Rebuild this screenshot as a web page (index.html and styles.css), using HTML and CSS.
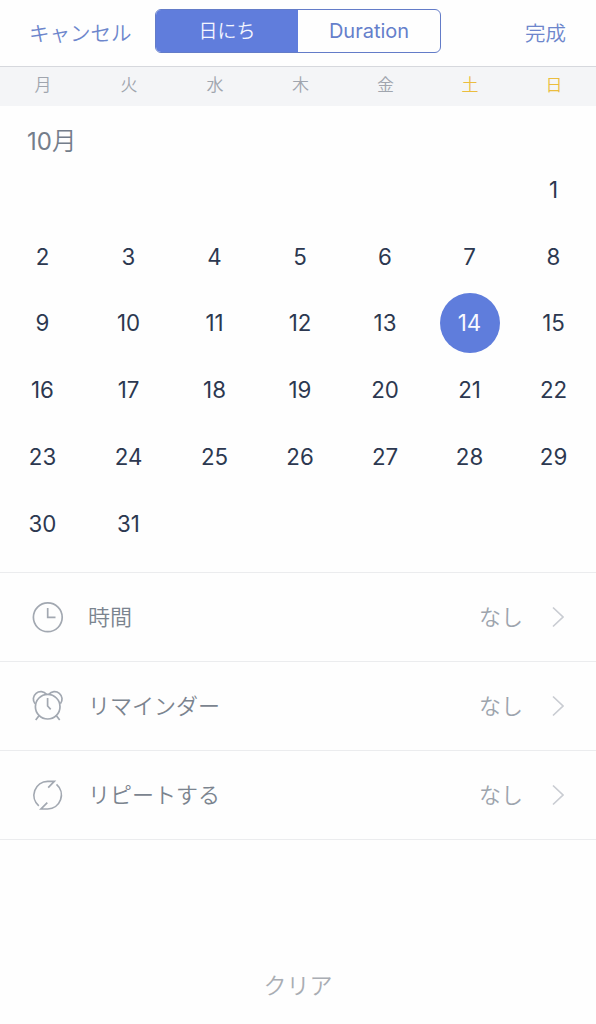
FILE: index.html
```html
<!DOCTYPE html>
<html lang="ja">
<head>
<meta charset="utf-8">
<title>日にち</title>
<link rel="stylesheet" href="styles.css">
</head>
<body>
<header class="navbar">
  <a class="nav-action cancel">キャンセル</a>
  <div class="segmented">
    <span class="segment active">日にち</span>
    <span class="segment latin">Duration</span>
  </div>
  <a class="nav-action done">完成</a>
</header>
<div class="week columns">
  <span>月</span><span>火</span><span>水</span><span>木</span><span>金</span><span class="weekend">土</span><span class="weekend">日</span>
</div>
<main>
  <h1 class="month"><span class="number">10</span>月</h1>
  <div class="days columns">
    <span class="first">1</span>
    <span>2</span><span>3</span><span>4</span><span>5</span><span>6</span><span>7</span><span>8</span>
    <span>9</span><span>10</span><span>11</span><span>12</span><span>13</span><span class="selected">14</span><span>15</span>
    <span>16</span><span>17</span><span>18</span><span>19</span><span>20</span><span>21</span><span>22</span>
    <span>23</span><span>24</span><span>25</span><span>26</span><span>27</span><span>28</span><span>29</span>
    <span>30</span><span>31</span>
  </div>
  <ul class="options">
    <li class="option">
      <svg class="icon" viewBox="0 0 32 32"><circle cx="15.800" cy="16.300" r="14.400"/><path d="M15.700 7V16.400H23.500"/></svg>
      <span class="label">時間</span><span class="value">なし</span>
      <svg class="chevron" viewBox="0 0 12 22"><path d="M1 1.500 11 11 1 20.500"/></svg>
    </li>
    <li class="option">
      <svg class="icon" viewBox="0 0 32 32"><circle cx="15.700" cy="16.700" r="12.300"/><path d="M15.600 8V16L18.700 19.400M3 13.700A7.300 7.300 0 1 1 14.500 4.400M28.400 13.700A7.300 7.300 0 1 0 16.900 4.400M7.200 25.500 3.700 30M24.200 25.500 27.700 30"/></svg>
      <span class="label">リマインダー</span><span class="value">なし</span>
      <svg class="chevron" viewBox="0 0 12 22"><path d="M1 1.500 11 11 1 20.500"/></svg>
    </li>
    <li class="option">
      <svg class="icon" viewBox="0 0 32 32"><path d="M6.800 26.900A14 14 0 0 1 15.700 2.300H22.300L16.200 8.600M24.500 5.400A14 14 0 0 1 15.700 30H9L15.300 23.600"/></svg>
      <span class="label">リピートする</span><span class="value">なし</span>
      <svg class="chevron" viewBox="0 0 12 22"><path d="M1 1.500 11 11 1 20.500"/></svg>
    </li>
  </ul>
</main>
<footer class="footer"><a class="clear">クリア</a></footer>
</body>
</html>
```
FILE: styles.css
```css
* { box-sizing: border-box; }
body {
  margin: 0;
  width: 596px;
  height: 1024px;
  display: flex;
  flex-direction: column;
  background: #fefefe;
  color: #2c3850;
  font-family: Inter, "Noto Sans CJK JP", sans-serif;
  overflow: hidden;
}
.navbar {
  height: 67px;
  display: grid;
  grid-template-columns: 155px 286px 1fr;
  padding-top: 9px;
  border-bottom: 1px solid #d6d8dd;
  align-items: start;
}
.nav-action {
  color: #6d86cc;
  font-size: 20.5px;
  font-weight: 350;
  line-height: 49px;
}
.cancel { padding-left: 29px; }
.done { padding-right: 30px; text-align: right; }
.segmented {
  display: flex;
  height: 44px;
  border: 1.5px solid #637cc8;
  border-radius: 6px;
  overflow: hidden;
}
.segment {
  flex: 1;
  text-align: center;
  line-height: 43px;
  font-size: 19px;
  color: #657fcb;
}
.segment.active { background: #607ddc; color: #f4f6ff; font-weight: 350; }
.segment.latin { font-size: 20px; }
.columns {
  display: grid;
  grid-template-columns: 86px 86px 86px 85px 85px 84px 84px;
  text-align: center;
}
.week {
  height: 39px;
  background: #f4f5f7;
  color: #a0a5ae;
  font-size: 17px;
  font-weight: 350;
  line-height: 36px;
}
.weekend { color: #ebbd3e; }
.month {
  margin: 0;
  padding: 15px 0 0 27px;
  height: 50px;
  font-size: 24.5px;
  font-weight: 350;
  line-height: 41px;
  color: #747d8b;
}
.number { font-size: 24px; font-weight: 400; }
.days {
  height: 400.5px;
  margin-left: -0.5px;
  grid-template-rows: repeat(6, 1fr);
  align-items: center;
  justify-items: center;
  font-size: 22.3px;
}
.first { grid-column: 7; }
.selected {
  width: 60px;
  height: 60px;
  border-radius: 50%;
  line-height: 60px;
  background: #5f7ddc;
  color: #f8f9ff;
}
.options { list-style: none; margin: 15.5px 0 0; padding: 0; border-top: 1px solid #ebecee; }
.option {
  height: 89px;
  display: flex;
  align-items: center;
  padding: 0 32px;
  border-bottom: 1px solid #ebecee;
  font-size: 22px;
  font-weight: 350;
}
.icon { width: 32px; height: 32px; margin-right: 24px; stroke: #a2a8b1; stroke-width: 1.7; }
.icon, .chevron { fill: none; flex: none; }
.label, .value { padding-bottom: 4px; }
.label { flex: 1; color: #7b848f; }
.value { color: #9da4ad; }
.chevron { width: 12px; height: 22px; margin-left: 29px; stroke: #c9ccd2; stroke-width: 1.7; }
.footer { flex: 1; display: flex; justify-content: center; padding-top: 130px; }
.clear { font-size: 23px; font-weight: 350; line-height: 32px; color: #a9adb3; }
```
